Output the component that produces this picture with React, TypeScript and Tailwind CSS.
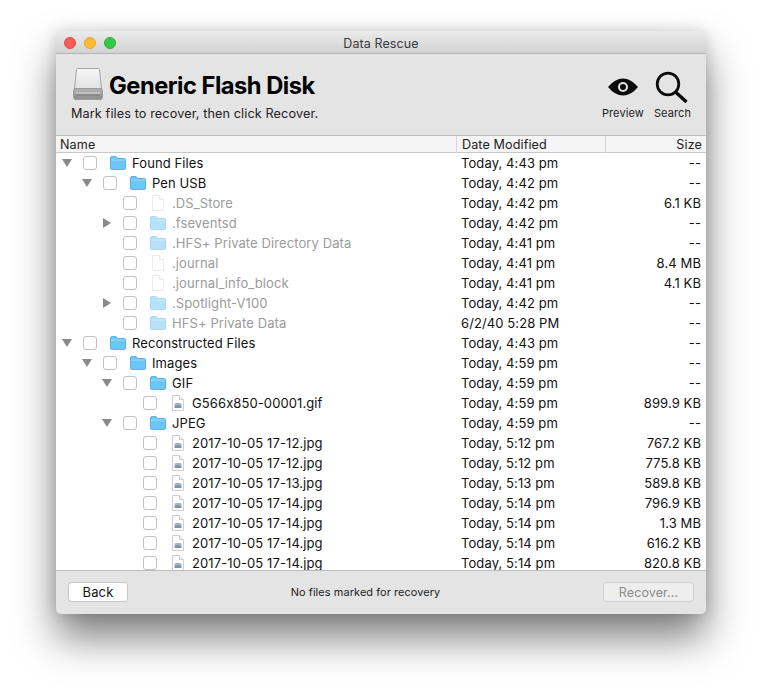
import React from 'react';

type Kind = 'folder' | 'file' | 'image';

interface Row {
  level: number;
  arrow?: 'open' | 'closed';
  kind: Kind;
  name: string;
  date: string;
  size: string;
  dim?: boolean;
}

const rows: Row[] = [
  { level: 0, arrow: 'open', kind: 'folder', name: 'Found Files', date: 'Today, 4:43 pm', size: '--' },
  { level: 1, arrow: 'open', kind: 'folder', name: 'Pen USB', date: 'Today, 4:42 pm', size: '--' },
  { level: 2, kind: 'file', name: '.DS_Store', date: 'Today, 4:42 pm', size: '6.1 KB', dim: true },
  { level: 2, arrow: 'closed', kind: 'folder', name: '.fseventsd', date: 'Today, 4:42 pm', size: '--', dim: true },
  { level: 2, kind: 'folder', name: '.HFS+ Private Directory Data', date: 'Today, 4:41 pm', size: '--', dim: true },
  { level: 2, kind: 'file', name: '.journal', date: 'Today, 4:41 pm', size: '8.4 MB', dim: true },
  { level: 2, kind: 'file', name: '.journal_info_block', date: 'Today, 4:41 pm', size: '4.1 KB', dim: true },
  { level: 2, arrow: 'closed', kind: 'folder', name: '.Spotlight-V100', date: 'Today, 4:42 pm', size: '--', dim: true },
  { level: 2, kind: 'folder', name: 'HFS+ Private Data', date: '6/2/40 5:28 PM', size: '--', dim: true },
  { level: 0, arrow: 'open', kind: 'folder', name: 'Reconstructed Files', date: 'Today, 4:43 pm', size: '--' },
  { level: 1, arrow: 'open', kind: 'folder', name: 'Images', date: 'Today, 4:59 pm', size: '--' },
  { level: 2, arrow: 'open', kind: 'folder', name: 'GIF', date: 'Today, 4:59 pm', size: '--' },
  { level: 3, kind: 'image', name: 'G566x850-00001.gif', date: 'Today, 4:59 pm', size: '899.9 KB' },
  { level: 2, arrow: 'open', kind: 'folder', name: 'JPEG', date: 'Today, 4:59 pm', size: '--' },
  { level: 3, kind: 'image', name: '2017-10-05 17-12.jpg', date: 'Today, 5:12 pm', size: '767.2 KB' },
  { level: 3, kind: 'image', name: '2017-10-05 17-12.jpg', date: 'Today, 5:12 pm', size: '775.8 KB' },
  { level: 3, kind: 'image', name: '2017-10-05 17-13.jpg', date: 'Today, 5:13 pm', size: '589.8 KB' },
  { level: 3, kind: 'image', name: '2017-10-05 17-14.jpg', date: 'Today, 5:14 pm', size: '796.9 KB' },
  { level: 3, kind: 'image', name: '2017-10-05 17-14.jpg', date: 'Today, 5:14 pm', size: '1.3 MB' },
  { level: 3, kind: 'image', name: '2017-10-05 17-14.jpg', date: 'Today, 5:14 pm', size: '616.2 KB' },
  { level: 3, kind: 'image', name: '2017-10-05 17-14.jpg', date: 'Today, 5:14 pm', size: '820.8 KB' },
];

const FolderIcon = ({ dim }: { dim?: boolean }) => (
  <svg width="16" height="14" viewBox="0 0 16 14" className={dim ? 'opacity-50' : ''}>
    <path d="M0.5 2 Q0.5 0.5 2 0.5 H5.5 Q6.5 0.5 7 1.5 L7.4 2.5 H14.5 Q15.5 2.5 15.5 3.5 V12.5 Q15.5 13.5 14.5 13.5 H1.5 Q0.5 13.5 0.5 12.5 Z" fill="#6ec6f7" stroke="#45a5e0" strokeWidth="0.8" />
    <rect x="1" y="3.6" width="14" height="1" fill="#9bdafb" />
  </svg>
);

const FileIcon = ({ image, dim }: { image?: boolean; dim?: boolean }) => (
  <svg width="12" height="16" viewBox="0 0 12 16" className={dim ? 'opacity-40' : ''}>
    <path d="M0.5 0.5 H7.5 L11.5 4.5 V15.5 H0.5 Z" fill="#fff" stroke="#cfcfcf" />
    <path d="M7.5 0.5 V4.5 H11.5" fill="#f4f4f4" stroke="#cfcfcf" />
    {image && (
      <>
        <path d="M2.5 9.5 Q2.5 8 4 8 H8 Q9.5 8 9.5 9.5 V10.5 H2.5 Z" fill="#9db5d0" />
        <path d="M2.5 10.5 L6 9.8 L9.5 10.5 V13 H2.5 Z" fill="#8a93a0" />
      </>
    )}
  </svg>
);

const DiskIcon = () => (
  <svg width="30" height="32" viewBox="0 0 30 32">
    <defs>
      <linearGradient id="diskTop" x1="0" y1="0" x2="0" y2="1">
        <stop offset="0" stopColor="#f6f6f6" />
        <stop offset="1" stopColor="#e2e2e2" />
      </linearGradient>
      <linearGradient id="diskBase" x1="0" y1="0" x2="0" y2="1">
        <stop offset="0" stopColor="#b4b4b4" />
        <stop offset="1" stopColor="#8c8c8c" />
      </linearGradient>
    </defs>
    <path d="M3.5 1.5 Q3.5 0.5 4.5 0.5 H25.5 Q26.5 0.5 26.5 1.5 L28.5 21 H1.5 Z" fill="url(#diskTop)" stroke="#a4a4a4" />
    <rect x="0.5" y="20.5" width="29" height="11" rx="2.5" fill="url(#diskBase)" stroke="#888" strokeWidth="0.6" />
    <rect x="3" y="24.5" width="24" height="1" fill="#e0e0e0" />
    <rect x="3" y="26.5" width="24" height="1" fill="#767676" />
  </svg>
);

const EyeIcon = () => (
  <svg width="30" height="18" viewBox="0 0 30 18">
    <path d="M0 9 Q7 0.5 15 0.5 Q23 0.5 30 9 Q23 17.5 15 17.5 Q7 17.5 0 9 Z" fill="#0a0a0a" />
    <circle cx="15" cy="9" r="5" fill="#e4e4e4" />
    <circle cx="15" cy="9" r="3" fill="#0a0a0a" />
  </svg>
);

const SearchIcon = () => (
  <svg width="34" height="32" viewBox="0 0 34 32" fill="none" stroke="#0a0a0a">
    <circle cx="13" cy="13" r="10.8" strokeWidth="2.8" />
    <path d="M20.5 21 L31.5 31" strokeWidth="3.4" />
  </svg>
);

const TreeRow = ({ row }: { row: Row }) => (
  <div className="grid h-5 shrink-0 grid-cols-[405px_1fr_auto] items-center pr-[5px] leading-5">
    <div className="relative flex h-5 items-center" style={{ paddingLeft: 27 + row.level * 20 }}>
      {row.arrow === 'open' && (
        <span
          className="absolute top-[6px] h-0 w-0 border-x-[5px] border-t-[8px] border-x-transparent border-t-[#8a8a8a]"
          style={{ left: 6 + row.level * 20 }}
        />
      )}
      {row.arrow === 'closed' && (
        <span
          className="absolute top-[5px] h-0 w-0 border-y-[5px] border-l-[8px] border-y-transparent border-l-[#8a8a8a]"
          style={{ left: 7 + row.level * 20 }}
        />
      )}
      <span className="h-[14px] w-[14px] shrink-0 rounded-[3px] border border-[#c2c2c2] bg-white" />
      <span className="ml-[13px] flex w-4 shrink-0 justify-center">
        {row.kind === 'folder' ? (
          <FolderIcon dim={row.dim} />
        ) : (
          <FileIcon image={row.kind === 'image'} dim={row.dim} />
        )}
      </span>
      <span className={`ml-[6px] whitespace-nowrap ${row.dim ? 'text-[#9b9b9b]' : 'text-[#111]'}`}>{row.name}</span>
    </div>
    <span className="text-[#111]">{row.date}</span>
    <span className="text-right text-[#111]">{row.size}</span>
  </div>
);

export default function App() {
  return (
    <div className="h-[694px] w-[762px] overflow-hidden bg-white pl-[56px] pt-[31px] font-['Inter','Liberation_Sans',sans-serif] text-[13px] tracking-[0.1px] text-[#111]">
      <div className="flex h-[583px] w-[650px] flex-col overflow-hidden rounded-[5px] bg-[#e4e4e4] shadow-[0_24px_40px_rgba(0,0,0,0.5),0_0_14px_rgba(0,0,0,0.15)]">
        <div className="relative flex h-[23px] shrink-0 items-center justify-center border-b border-[#b4b4b4] bg-gradient-to-b from-[#ebebeb] to-[#d2d2d2] pt-[4px]">
          <div className="absolute left-2 top-[6px] flex gap-2">
            <span className="h-3 w-3 rounded-full border border-[#e2463f] bg-[#fc5b57]" />
            <span className="h-3 w-3 rounded-full border border-[#e1a73e] bg-[#fdbb2f]" />
            <span className="h-3 w-3 rounded-full border border-[#2dac2f] bg-[#34c748]" />
          </div>
          <span className="text-[12.5px] text-[#3a3a3a]">Data Rescue</span>
        </div>

        <div className="flex h-[82px] shrink-0 justify-between border-b border-[#bcbcbc] px-[15px]">
          <div className="flex flex-col">
            <div className="mt-[14px] flex items-center gap-[6px] pl-[2px]">
              <DiskIcon />
              <h1 className="h-8 text-[23.7px] font-bold leading-[36px] tracking-[-0.5px] text-black">Generic Flash Disk</h1>
            </div>
            <p className="mt-[4px] text-[12.7px] text-[#222]">Mark files to recover, then click Recover.</p>
          </div>
          <div className="flex items-start gap-[10px] pt-[17px] text-[11px] text-[#222]">
            <div className="flex flex-col items-center">
              <div className="flex h-[32px] items-center">
                <EyeIcon />
              </div>
              <span className="mt-[2px]">Preview</span>
            </div>
            <div className="flex flex-col items-center">
              <SearchIcon />
              <span className="mt-[2px]">Search</span>
            </div>
          </div>
        </div>

        <div className="grid h-[17px] shrink-0 grid-cols-[400px_149px_1fr] items-center border-b border-[#c8c8c8] bg-[#f5f5f5] pb-[1px] text-[12.6px] text-[#222]">
          <span className="pl-[4px]">Name</span>
          <span className="border-l border-[#d4d4d4] pl-[5px]">Date Modified</span>
          <span className="border-l border-[#d4d4d4] pr-[4px] text-right">Size</span>
        </div>

        <div className="flex min-h-0 flex-1 flex-col overflow-hidden bg-white">
          {rows.map((row, i) => (
            <TreeRow key={i} row={row} />
          ))}
        </div>

        <div className="flex h-[44px] shrink-0 items-center justify-between border-t border-[#bcbcbc] px-3 pb-[1px]">
          <button className="h-5 w-[60px] rounded-[4px] border border-[#c6c6c6] bg-white text-[13px] text-[#111]">Back</button>
          <span className="text-[10.9px] text-[#222]">No files marked for recovery</span>
          <button className="h-5 w-[91px] rounded-[4px] border border-[#d2d2d2] bg-[#eeeeee] pt-[1px] text-[12.5px] text-[#8a8a8a]">Recover...</button>
        </div>
      </div>
    </div>
  );
}
